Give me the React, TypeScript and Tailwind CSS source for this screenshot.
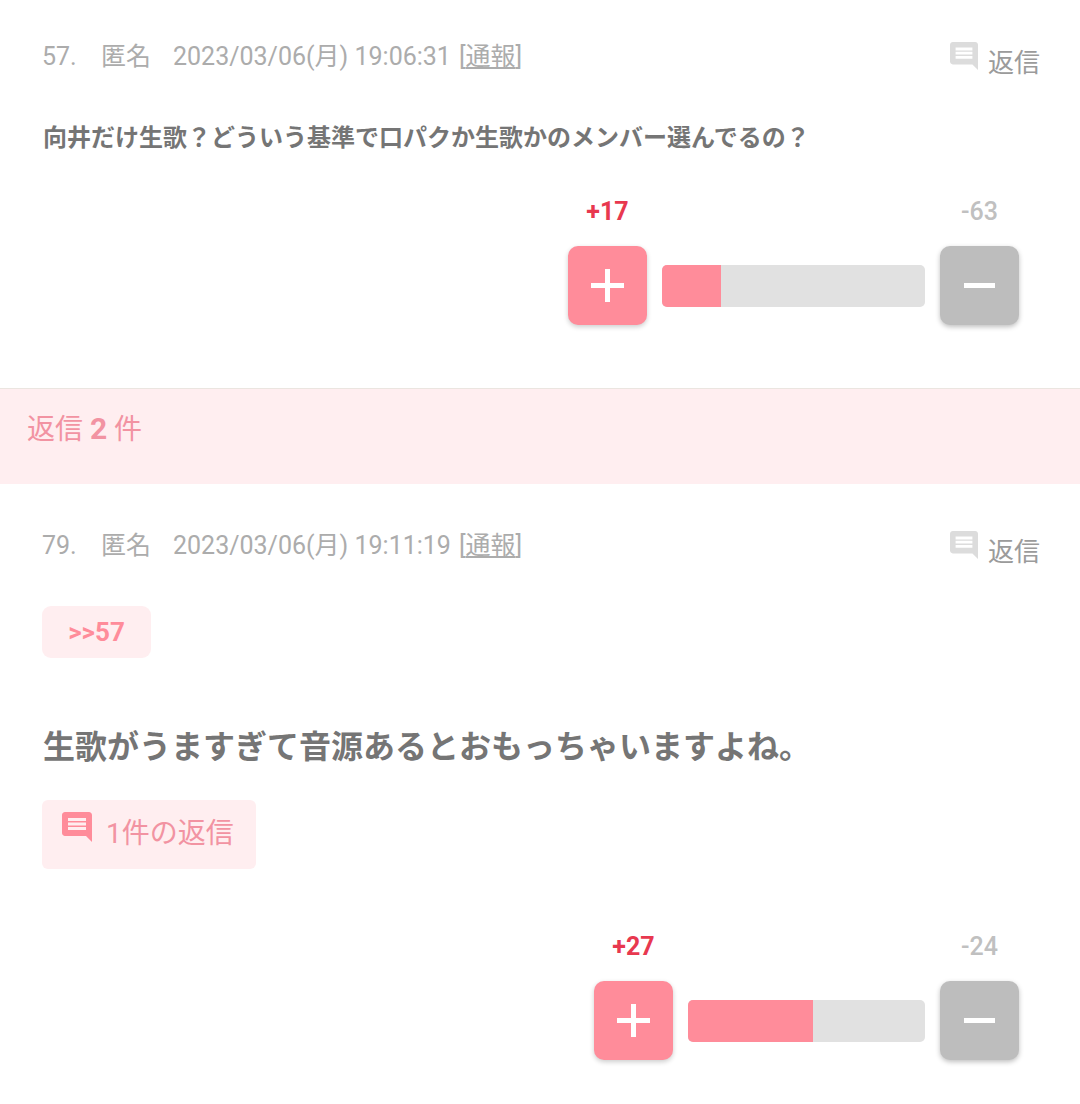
import React from 'react';

const FONT = 'font-[Roboto,"Noto_Sans_CJK_JP",sans-serif]';

function CommentIcon({ className }: { className: string }) {
  return (
    <svg viewBox="2 2 20 20" className={className} fill="currentColor">
      <path d="M21.99 4c0-1.1-.89-2-1.99-2H4c-1.1 0-2 .9-2 2v12c0 1.1.9 2 2 2h14l4 4-.01-18zM18 14H6v-2h12v2zm0-3H6V9h12v2zm0-3H6V6h12v2z" />
    </svg>
  );
}

function MetaRow({ num, time }: { num: string; time: string }) {
  return (
    <div className="flex items-start justify-between pl-[42px] pr-[40px]">
      <div className="flex h-[40px] items-center text-[25px] leading-[40px] text-[#acacac]">
        <span className="w-[59px]">{num}</span>
        <span className="w-[72px]">匿名</span>
        <span>{time}</span>
        <span className="ml-[8px]">
          [<span className="underline">通報</span>]
        </span>
      </div>
      <div className="flex items-start">
        <CommentIcon className="mt-[5px] h-[28px] w-[28px] text-[#dcdcdc]" />
        <span className="ml-[10px] mt-[6px] text-[26px] leading-[40px] text-[#9b9b9b]">返信</span>
      </div>
    </div>
  );
}

function Votes({ plus, minus, barClass, fillClass }: { plus: string; minus: string; barClass: string; fillClass: string }) {
  return (
    <div className="flex justify-end pr-[61px]">
      <div className="flex flex-col items-center">
        <span className="mb-[16px] h-[36px] text-[25px] font-bold leading-[36px] text-[#e8384f]">{plus}</span>
        <div className="flex h-[79px] w-[79px] items-center justify-center rounded-[10px] bg-[#ff8c9a] shadow-[0_2px_5px_rgba(0,0,0,0.2)]">
          <svg viewBox="0 0 33 33" className="h-[33px] w-[33px] text-white" fill="currentColor">
            <path d="M14 0h5v14h14v5H19v14h-5V19H0v-5h14z" />
          </svg>
        </div>
      </div>
      <div className={`mx-[15px] mt-[71px] h-[42px] overflow-hidden rounded-[5px] bg-[#e1e1e1] ${barClass}`}>
        <div className={`h-full bg-[#ff8c9a] ${fillClass}`} />
      </div>
      <div className="flex flex-col items-center">
        <span className="mb-[16px] h-[36px] text-[25px] font-medium leading-[35px] text-[#c0c0c0]">{minus}</span>
        <div className="flex h-[79px] w-[79px] items-center justify-center rounded-[10px] bg-[#bdbdbd] shadow-[0_2px_5px_rgba(0,0,0,0.25)]">
          <div className="h-[5px] w-[31px] bg-white" />
        </div>
      </div>
    </div>
  );
}

export default function App() {
  return (
    <div className={`h-[1104px] w-[1080px] overflow-hidden bg-white ${FONT}`}>
      <section className="h-[389px] border-b border-[#ebe5e0] pt-[37px]">
        <MetaRow num="57." time="2023/03/06(月) 19:06:31" />
        <p className="ml-[43px] mt-[35px] text-[24px] font-bold leading-[40px] text-[#757575]">
          向井だけ生歌？どういう基準で口パクか生歌かのメンバー選んでるの？
        </p>
        <div className="mt-[36px]">
          <Votes plus="+17" minus="-63" barClass="w-[263px]" fillClass="w-[59px]" />
        </div>
      </section>

      <div className="h-[95px] bg-[#ffeef0] pl-[27px] pt-[20px] text-[28px] leading-[40px] text-[#f293a2]">
        返信 <span className="text-[30px] font-bold">2</span> 件
      </div>

      <section className="pt-[42px]">
        <MetaRow num="79." time="2023/03/06(月) 19:11:19" />
        <div className="ml-[42px] mt-[34px] flex h-[52px] w-[109px] items-center justify-center rounded-[9px] bg-[#ffeef0] text-[26px] font-bold text-[#ff8c9a]">
          &gt;&gt;57
        </div>
        <p className="ml-[43px] mt-[67px] text-[32px] font-bold leading-[44px] text-[#757575]">
          生歌がうますぎて音源あるとおもっちゃいますよね。
        </p>
        <div className="ml-[42px] mt-[31px] flex h-[69px] w-[214px] items-start rounded-[6px] bg-[#ffeef0] pl-[20px]">
          <CommentIcon className="mt-[12px] h-[30px] w-[30px] text-[#ff8c9a]" />
          <span className="ml-[14px] mt-[14px] text-[28px] leading-[40px] text-[#f293a2]">1件の返信</span>
        </div>
        <div className="mt-[60px]">
          <Votes plus="+27" minus="-24" barClass="w-[237px]" fillClass="w-[125px]" />
        </div>
      </section>
    </div>
  );
}
